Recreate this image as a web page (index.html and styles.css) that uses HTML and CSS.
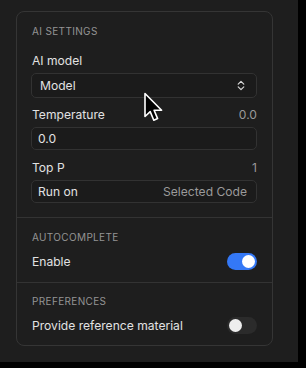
FILE: index.html
```html
<!DOCTYPE html>
<html>
<head>
<meta charset="utf-8">
<link rel="stylesheet" href="styles.css">
</head>
<body>
<div class="screen">
  <div class="card">
    <section class="section s1">
      <div class="heading">AI SETTINGS</div>
      <div class="row label-row"><span class="label">AI model</span></div>
      <div class="box select">
        <span class="label">Model</span>
        <svg class="chev" width="8" height="11" viewBox="0 0 8 11"><path d="M1.2 4.2 L4 1.4 L6.8 4.2 M1.2 6.8 L4 9.6 L6.8 6.8" fill="none" stroke="#d8d8d8" stroke-width="1.2" stroke-linecap="round" stroke-linejoin="round"/></svg>
      </div>
      <div class="row label-row gap1"><span class="label">Temperature</span><span class="value">0.0</span></div>
      <div class="box input"><span class="label">0.0</span></div>
      <div class="row label-row gap2"><span class="label">Top P</span><span class="value">1</span></div>
      <div class="box input runon"><span class="label">Run on</span><span class="value">Selected Code</span></div>
    </section>
    <section class="section s2">
      <div class="heading">AUTOCOMPLETE</div>
      <div class="row toggle-row"><span class="label">Enable</span><span class="toggle on"><span class="knob"></span></span></div>
    </section>
    <section class="section s3">
      <div class="heading">PREFERENCES</div>
      <div class="row toggle-row"><span class="label">Provide reference material</span><span class="toggle"><span class="knob"></span></span></div>
    </section>
  </div>
  <svg class="cursor" width="24" height="32" viewBox="0 0 24 32">
    <path d="M2 1.5 L2 24.5 L7.2 19.6 L10.8 28.2 L14.6 26.6 L11.1 18.2 L18.6 18.2 Z" fill="#000" stroke="#fff" stroke-width="1.6" stroke-linejoin="round"/>
  </svg>
</div>
</body>
</html>
```

FILE: styles.css
```css
html, body {
  margin: 0;
  padding: 0;
  background: #000;
}
body {
  width: 306px;
  height: 368px;
  overflow: hidden;
  font-family: Inter, "Noto Sans", sans-serif;
  -webkit-font-smoothing: antialiased;
}
.screen {
  position: relative;
  width: 298px;
  height: 362px;
  background: #1e1e1e;
  padding: 11px 0 0 16px;
  box-sizing: border-box;
}
.card {
  width: 257px;
  height: 335px;
  box-sizing: border-box;
  border: 1px solid #353535;
  border-radius: 8px;
  background: #1e1e1e;
}
.section {
  padding: 0 15px 0 14px;
}
.s1 {
  padding-top: 12px;
  height: 205px;
  box-sizing: border-box;
}
.s2 {
  border-top: 1px solid #333;
  padding-top: 12px;
  height: 65px;
  box-sizing: border-box;
}
.s3 {
  border-top: 1px solid #333;
  padding-top: 11px;
}
.heading {
  height: 14px;
  line-height: 14px;
  font-size: 10px;
  letter-spacing: 0.35px;
  color: #949494;
  padding-left: 1px;
}
.row {
  display: flex;
  justify-content: space-between;
  align-items: center;
  height: 20px;
  padding-left: 1px;
}
.label-row { margin-top: 12px; }
.label-row.gap1 { margin-top: 6px; }
.label-row.gap2 { margin-top: 7px; }
.label {
  font-size: 12.1px;
  color: #e2e2e2;
}
.value {
  font-size: 12.1px;
  color: #9a9a9a;
}
.box {
  margin-top: 3px;
  box-sizing: border-box;
  border: 1px solid #323232;
  border-radius: 5px;
  background: #1b1b1b;
  display: flex;
  align-items: center;
  justify-content: space-between;
}
.select {
  height: 25px;
  padding: 0 11px 0 8px;
}
.input {
  height: 23px;
  padding: 0 9px 0 6px;
}
.chev { display: block; }
.toggle-row { margin-top: 7px; }
.toggle {
  position: relative;
  width: 30px;
  height: 17px;
  border-radius: 9px;
  background: #2b2b2b;
}
.toggle.on { background: #3478f6; }
.knob {
  position: absolute;
  top: 2px;
  left: 2px;
  width: 13px;
  height: 13px;
  border-radius: 50%;
  background: #eeeeee;
}
.toggle.on .knob {
  left: 15px;
  background: #fff;
}
.cursor {
  position: absolute;
  left: 143px;
  top: 92px;
}
```
